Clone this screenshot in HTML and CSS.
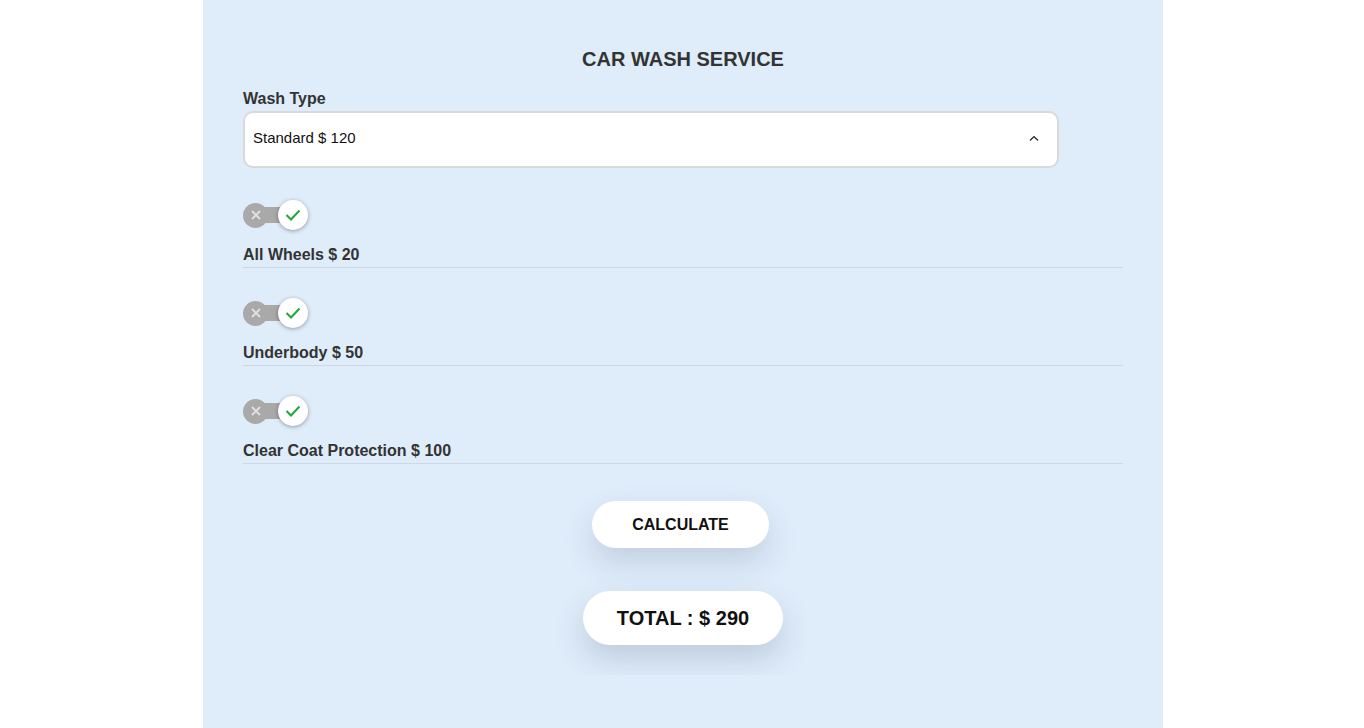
FILE: index.html
```html
<!DOCTYPE html>
<html>
<head>
<meta charset="utf-8">
<link rel="stylesheet" href="styles.css">
</head>
<body>
<div class="panel">
  <form class="form">
    <h2 class="title">CAR WASH SERVICE</h2>
    <label class="field-label">Wash Type</label>
    <div class="select">
      <span class="select-text">Standard $ 120</span>
      <svg class="caret" width="10" height="6" viewBox="0 0 10 6"><path d="M1 5.5 L5 1.5 L9 5.5" fill="none" stroke="#222" stroke-width="1.2"/></svg>
    </div>

    <div class="option">
      <div class="toggle">
        <span class="track"><svg width="10" height="10" viewBox="0 0 10 10"><path d="M1 1 L9 9 M9 1 L1 9" stroke="#e2e2e2" stroke-width="1.8"/></svg></span>
        <span class="neck"></span>
        <span class="knob"><svg width="16" height="14" viewBox="0 0 16 14"><path d="M1.5 7 L6 11.5 L14.5 2.5" fill="none" stroke="#1fa83a" stroke-width="2"/></svg></span>
      </div>
      <div class="option-label">All Wheels $ 20</div>
    </div>

    <div class="option">
      <div class="toggle">
        <span class="track"><svg width="10" height="10" viewBox="0 0 10 10"><path d="M1 1 L9 9 M9 1 L1 9" stroke="#e2e2e2" stroke-width="1.8"/></svg></span>
        <span class="neck"></span>
        <span class="knob"><svg width="16" height="14" viewBox="0 0 16 14"><path d="M1.5 7 L6 11.5 L14.5 2.5" fill="none" stroke="#1fa83a" stroke-width="2"/></svg></span>
      </div>
      <div class="option-label">Underbody $ 50</div>
    </div>

    <div class="option">
      <div class="toggle">
        <span class="track"><svg width="10" height="10" viewBox="0 0 10 10"><path d="M1 1 L9 9 M9 1 L1 9" stroke="#e2e2e2" stroke-width="1.8"/></svg></span>
        <span class="neck"></span>
        <span class="knob"><svg width="16" height="14" viewBox="0 0 16 14"><path d="M1.5 7 L6 11.5 L14.5 2.5" fill="none" stroke="#1fa83a" stroke-width="2"/></svg></span>
      </div>
      <div class="option-label">Clear Coat Protection $ 100</div>
    </div>

    <div class="actions">
      <button type="button" class="btn-calc">CALCULATE</button>
      <div class="total">TOTAL : $ 290</div>
    </div>
  </form>
</div>
</body>
</html>
```
FILE: styles.css
```css
html, body {
  margin: 0;
  padding: 0;
  background: #ffffff;
  font-family: "Liberation Sans", Arial, sans-serif;
}
body {
  padding-left: 2px;
}
.panel {
  width: 960px;
  min-height: 728px;
  margin: 0 auto;
  background: #dfecfa;
}
.form {
  overflow: hidden;
  padding: 0 40px 30px;
  display: flex;
  flex-direction: column;
}
.title {
  margin: 47px 0 0;
  font-size: 20px;
  line-height: 24px;
  font-weight: bold;
  color: #333;
  text-align: center;
}
.field-label {
  margin-top: 19px;
  font-size: 16px;
  line-height: 18px;
  font-weight: bold;
  color: #333;
}
.select {
  margin-top: 3px;
  width: 816px;
  height: 57px;
  box-sizing: border-box;
  border: 2px solid #d9d9dc;
  border-radius: 10px;
  background: #fff;
  display: flex;
  align-items: center;
  justify-content: space-between;
  padding: 0 18px 5px 8px;
  font-size: 15px;
  color: #111;
}
.caret {
  margin-top: 2px;
}
.option {
  margin-top: 32px;
  border-bottom: 1px solid #cfd8e2;
  padding-bottom: 3px;
}
.option + .option {
  margin-top: 30px;
}
.toggle {
  display: flex;
  align-items: center;
  height: 30px;
}
.track {
  width: 25px;
  height: 25px;
  border-radius: 50%;
  background: #a9a9a9;
  display: flex;
  align-items: center;
  justify-content: center;
}
.neck {
  width: 19px;
  height: 16px;
  background: #a9a9a9;
  margin-left: -4px;
  margin-right: -5px;
}
.knob {
  position: relative;
  width: 30px;
  height: 30px;
  border-radius: 50%;
  background: #fff;
  box-shadow: 0 1px 4px rgba(0,0,0,0.35);
  display: flex;
  align-items: center;
  justify-content: center;
}
.option-label {
  margin-top: 16px;
  font-size: 16px;
  line-height: 18px;
  font-weight: bold;
  color: #333;
}
.actions {
  display: flex;
  flex-direction: column;
  align-items: center;
  margin-top: 37px;
}
.btn-calc {
  height: 47px;
  width: 177px;
  border: none;
  border-radius: 24px;
  background: #fff;
  font-family: "Liberation Sans", Arial, sans-serif;
  font-size: 16px;
  font-weight: bold;
  color: #111;
  box-shadow: 0 14px 30px rgba(60,80,110,0.18);
  margin-left: -5px;
}
.total {
  margin-top: 43px;
  height: 54px;
  width: 200px;
  border-radius: 27px;
  background: #fff;
  display: flex;
  align-items: center;
  justify-content: center;
  font-size: 20px;
  font-weight: bold;
  color: #111;
  box-shadow: 0 14px 30px rgba(60,80,110,0.2);
}
```
